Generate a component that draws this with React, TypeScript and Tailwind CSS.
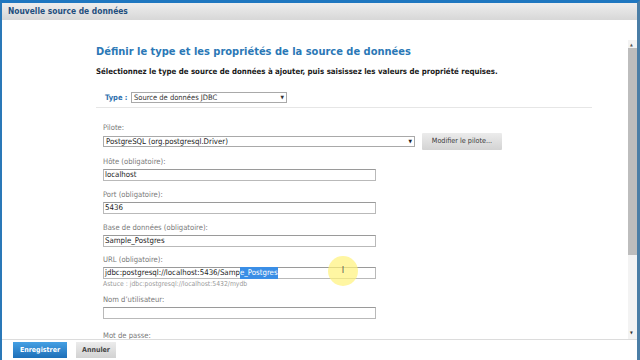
import React from 'react';

const font = { fontFamily: '"DejaVu Sans Condensed", "DejaVu Sans", Verdana, sans-serif' };

function Field({ label, value, selected, hint }: { label: string; value?: string; selected?: string; hint?: string }) {
  return (
    <div className="flex flex-col">
      <div className="h-[10px] text-[7.6px] leading-[10px] text-[#7a7a7a]">{label}</div>
      <div className="mt-[2px] flex h-[12px] w-[273px] items-center border border-[#b9b9b9] border-t-[#9a9a9a] bg-white pl-[1px] text-[7.8px] text-[#222]">
        <span>{value}</span>
        {selected && <span className="bg-[#3a8ee6] text-white">{selected}</span>}
      </div>
      {hint && <div className="mt-[1px] h-[8px] text-[6.8px] leading-[8px] text-[#9a9a9a]">{hint}</div>}
    </div>
  );
}

export default function App() {
  return (
    <div style={font} className="flex h-[360px] w-[640px] flex-col overflow-hidden border-t-[3px] border-l-2 border-r-[3px] border-t-[#1f77c0] border-l-[#2a78b8] border-r-[#4b7ea6] bg-white">
      <div className="flex h-[17px] shrink-0 items-center bg-gradient-to-b from-[#eeeeee] to-[#d7d7d7] pl-[6px] text-[8.4px] font-bold text-[#1f4f7e]">
        Nouvelle source de données
      </div>
      <div className="h-[20px] shrink-0" />
      <div className="flex h-[300px] shrink-0 border-b border-[#dcdcdc]">
        <div className="flex-1 overflow-hidden pl-[94px] pt-[5px]">
          <h1 className="h-[14px] text-[11px] font-bold leading-[14px] text-[#2b78b6]">
            Définir le type et les propriétés de la source de données
          </h1>
          <p className="mt-[8px] h-[10px] text-[7.8px] font-bold leading-[10px] text-[#1a1a1a]">
            Sélectionnez le type de source de données à ajouter, puis saisissez les valeurs de propriété requises.
          </p>
          <div className="mt-[15px] flex h-[11px] items-center pl-[9px]">
            <span className="w-[26px] text-[7.5px] font-bold text-[#2f6fae]">Type :</span>
            <div className="flex h-[11px] w-[156px] items-center justify-between border border-[#a9a9a9] bg-white px-[2px] text-[7.5px] text-[#333]">
              <span>Source de données JDBC</span>
              <span className="text-[5px]">▼</span>
            </div>
          </div>
          <div className="mt-[4px] h-px w-[496px] bg-[#e6e6e6]" />
          <div className="mt-[15px] pl-[7px]">
            <div className="h-[10px] text-[7.6px] leading-[10px] text-[#7a7a7a]">Pilote:</div>
            <div className="flex h-[17px] items-center gap-[7px]">
              <div className="flex h-[11px] w-[312px] items-center justify-between border border-[#a9a9a9] bg-white px-[2px] text-[7.8px] text-[#222]">
                <span>PostgreSQL (org.postgresql.Driver)</span>
                <span className="text-[5px]">▼</span>
              </div>
              <div className="flex h-[17px] w-[80px] items-center justify-center rounded-[1px] bg-gradient-to-b from-[#ececec] to-[#d3d3d3] text-[7.2px] text-[#3a3a3a]">
                Modifier le pilote...
              </div>
            </div>
            <div className="mt-[7px] flex flex-col gap-[9px]">
              <Field label="Hôte (obligatoire):" value="localhost" />
              <Field label="Port (obligatoire):" value="5436" />
              <Field label="Base de données (obligatoire):" value="Sample_Postgres" />
              <div className="-mt-[1px]">
                <Field
                  label="URL (obligatoire):"
                  value="jdbc:postgresql://localhost:5436/Samp"
                  selected="e_Postgres"
                  hint="Astuce : jdbc:postgresql://localhost:5432/mydb"
                />
              </div>
              <div className="-mt-[2px]">
                <Field label="Nom d’utilisateur:" value="" />
              </div>
              <div className="mt-[3px]">
                <Field label="Mot de passe:" value="" />
              </div>
            </div>
          </div>
        </div>
        <div className="relative flex w-[9px] shrink-0 flex-col items-center bg-[#f3f3f3]">
          <div className="mt-[2px] h-[5px] w-[5px] text-[4px] leading-[5px] text-[#555]">▲</div>
          <div className="mt-[1px] h-[207px] w-[9px] bg-[#bdbdbd]" />
          <div className="flex-1" />
          <div className="mb-[4px] h-[5px] w-[5px] text-[4px] leading-[5px] text-[#333]">▼</div>
        </div>
      </div>
      <div className="flex flex-1 items-center gap-[9px] pl-[11px]">
        <div className="flex h-[16px] w-[54px] items-center justify-center bg-gradient-to-b from-[#45a0e4] to-[#1d6fb8] text-[7px] font-bold text-white">
          Enregistrer
        </div>
        <div className="flex h-[16px] w-[40px] items-center justify-center bg-gradient-to-b from-[#ececec] to-[#d2d2d2] text-[7px] font-bold text-[#444]">
          Annuler
        </div>
      </div>
      <div className="pointer-events-none absolute left-[328px] top-[256px] flex h-[30px] w-[30px] items-center justify-center rounded-full bg-[#fff27a]/70">
        <span className="text-[9px] text-[#555]">I</span>
      </div>
    </div>
  );
}
